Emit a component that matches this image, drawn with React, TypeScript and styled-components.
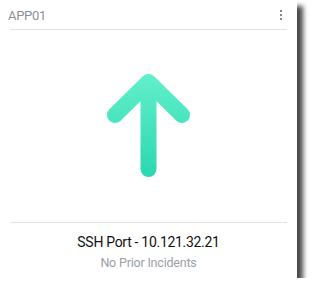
import React from "react";
import styled, { createGlobalStyle } from "styled-components";

const Global = createGlobalStyle`
  html, body { margin: 0; padding: 0; background: #ffffff; }
  body { font-family: Roboto, "Liberation Sans", sans-serif; }
`;

const Card = styled.div`
  width: 297px;
  height: 278px;
  background: #ffffff;
  box-shadow: 6px 6px 5px rgba(0, 0, 0, 0.72);
  display: flex;
  flex-direction: column;
`;

const Header = styled.div`
  height: 29px;
  display: flex;
  align-items: flex-start;
  justify-content: space-between;
  padding: 0 15px 0 8px;
  box-sizing: border-box;
`;

const Title = styled.span`
  font-size: 13px;
  line-height: 15px;
  color: #8b9099;
  letter-spacing: -0.3px;
  margin-top: 8px;
`;

const Kebab = styled.div`
  display: flex;
  flex-direction: column;
  gap: 2px;
  margin-top: 10px;
`;

const Dot = styled.span`
  width: 2px;
  height: 2px;
  background: #7b8a9a;
`;

const Divider = styled.div`
  height: 1px;
  background: #e3e3e3;
  margin: 0 10px;
  flex-shrink: 0;
`;

const Body = styled.div`
  flex: 1;
  display: flex;
  justify-content: center;
  align-items: flex-start;
  overflow: hidden;
`;

const Footer = styled.div`
  height: 55px;
  box-sizing: border-box;
  display: flex;
  flex-direction: column;
  align-items: center;
  padding-top: 11px;
  flex-shrink: 0;
`;

const Name = styled.div`
  font-size: 14px;
  color: #111;
  letter-spacing: -0.3px;
  line-height: 17px;
`;

const Sub = styled.div`
  font-size: 12.5px;
  color: #9aa0a8;
  letter-spacing: -0.2px;
  line-height: 17px;
  margin-top: 3px;
`;

const Arrow = () => (
  <svg width="297" height="192" viewBox="0 30 297 192">
    <defs>
      <linearGradient id="g" x1="0" y1="74" x2="0" y2="177" gradientUnits="userSpaceOnUse">
        <stop offset="0" stopColor="#62efcb" />
        <stop offset="1" stopColor="#2ad8b0" />
      </linearGradient>
    </defs>
    <g stroke="url(#g)" strokeWidth="16" strokeLinecap="round" strokeLinejoin="round" fill="none">
      <path d="M115 115 L148.5 82 L182 115" />
      <path d="M148.5 84 L148.5 169" />
    </g>
  </svg>
);

export default function App() {
  return (
    <>
      <Global />
      <Card>
        <Header>
          <Title>APP01</Title>
          <Kebab>
            <Dot />
            <Dot />
            <Dot />
          </Kebab>
        </Header>
        <Divider />
        <Body>
          <Arrow />
        </Body>
        <Divider />
        <Footer>
          <Name>SSH Port - 10.121.32.21</Name>
          <Sub>No Prior Incidents</Sub>
        </Footer>
      </Card>
    </>
  );
}
